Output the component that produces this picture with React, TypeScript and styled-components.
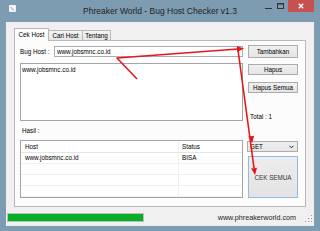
import React from "react";
import styled, { createGlobalStyle } from "styled-components";

const GlobalStyle = createGlobalStyle`
  html, body {
    margin: 0;
    padding: 0;
  }
  body {
    width: 320px;
    height: 231px;
    overflow: hidden;
    background: #7d9cb1;
    font-family: "Liberation Sans", Arial, sans-serif;
  }
`;

const Window = styled.div`
  position: relative;
  width: 320px;
  height: 231px;
  background: #7d9cb1;
  display: flex;
  flex-direction: column;
`;

const TitleBar = styled.div`
  height: 22px;
  flex-shrink: 0;
  display: grid;
  grid-template-columns: 1fr auto 1fr;
  align-items: start;
`;

const AppIcon = styled.svg`
  margin: 5px 0 0 9px;
`;

const Title = styled.div`
  padding-top: 6px;
  font-size: 8.5px;
  line-height: 10px;
  color: #1f1f1f;
  white-space: nowrap;
`;

const Controls = styled.div`
  justify-self: end;
  display: flex;
  align-items: flex-start;
  margin-right: 6px;
`;

const CtrlCell = styled.div`
  width: 12px;
  height: 12px;
  display: flex;
  align-items: center;
  justify-content: center;
`;

const CloseButton = styled.div`
  width: 26px;
  height: 12px;
  margin-left: 2px;
  background: #c75050;
  display: flex;
  align-items: center;
  justify-content: center;
`;

const Client = styled.div`
  flex: 1;
  min-height: 0;
  margin: 0 6px 5px 6px;
  background: #f0f0f0;
  display: flex;
  flex-direction: column;
`;

const TabArea = styled.div`
  flex: 1;
  min-height: 0;
  padding: 6px 8px 0 8px;
  display: flex;
  flex-direction: column;
`;

const TabStrip = styled.div`
  height: 13px;
  margin-bottom: -1px;
  display: flex;
  align-items: flex-start;
  position: relative;
  z-index: 1;
`;

const Tab = styled.div<{ $w: number; $active?: boolean }>`
  box-sizing: border-box;
  width: ${(p) => p.$w}px;
  height: ${(p) => (p.$active ? 13 : 11)}px;
  margin-top: ${(p) => (p.$active ? 0 : 2)}px;
  margin-left: -1px;
  &:first-child {
    margin-left: 0;
  }
  border: 1px solid #b9b9b9;
  border-bottom: ${(p) => (p.$active ? "none" : "1px solid #b9b9b9")};
  background: ${(p) =>
    p.$active ? "#fcfcfc" : "linear-gradient(#f3f3f3, #e6e6e6)"};
  font-size: 6.3px;
  line-height: ${(p) => (p.$active ? 12 : 9)}px;
  text-align: center;
  color: #000;
  white-space: nowrap;
`;

const Panel = styled.div`
  flex: 1;
  min-height: 0;
  border: 1px solid #b9b9b9;
  background: #fcfcfc;
  padding: 4px 7px 0 5px;
  display: flex;
  flex-direction: column;
`;

const Row = styled.div<{ $h: number; $mt?: number }>`
  height: ${(p) => p.$h}px;
  margin-top: ${(p) => p.$mt ?? 0}px;
  display: grid;
  grid-template-columns: 223px 51px;
  column-gap: 5px;
  flex-shrink: 0;
`;

const FieldLine = styled.div`
  display: flex;
  align-items: center;
`;

const Label = styled.span`
  width: 34px;
  font-size: 6.3px;
  color: #000;
  white-space: nowrap;
`;

const TextBox = styled.div`
  box-sizing: border-box;
  flex: 1;
  height: 11px;
  border: 1px solid #abadb3;
  background: #fff;
  padding-left: 2px;
  font-size: 6.3px;
  line-height: 9px;
  color: #000;
`;

const Button = styled.div<{ $h: number; $mt?: number; $default?: boolean }>`
  box-sizing: border-box;
  width: 50px;
  height: ${(p) => p.$h}px;
  margin-top: ${(p) => p.$mt ?? 0}px;
  border: 1px solid ${(p) => (p.$default ? "#8fbbe9" : "#acacac")};
  background: ${(p) =>
    p.$default
      ? "linear-gradient(#ededed, #e3e3e3)"
      : "linear-gradient(#f0f0f0, #e5e5e5)"};
  display: flex;
  align-items: center;
  justify-content: center;
  font-size: 6.3px;
  color: ${(p) => (p.$default ? "#333" : "#000")};
  white-space: nowrap;
`;

const Stack = styled.div`
  display: flex;
  flex-direction: column;
`;

const ListBox = styled.div`
  box-sizing: border-box;
  border: 1px solid #a5a5a5;
  background: #fff;
  padding: 2px 1px;
  font-size: 6.3px;
  line-height: 8px;
  color: #000;
`;

const SideText = styled.div<{ $mt: number }>`
  margin-top: ${(p) => p.$mt}px;
  padding-left: 2px;
  font-size: 6.3px;
  line-height: 8px;
  color: #000;
`;

const SectionLabel = styled.div`
  height: 20px;
  flex-shrink: 0;
  box-sizing: border-box;
  padding: 7px 0 0 2px;
  font-size: 6.3px;
  line-height: 8px;
  color: #000;
`;

const Table = styled.div`
  box-sizing: border-box;
  border: 1px solid #a5a5a5;
  background: #fff;
  display: grid;
  grid-template-columns: 158px 1fr;
  grid-template-rows: 12px repeat(4, 11px);
`;

const Cell = styled.div<{ $head?: boolean; $first?: boolean }>`
  box-sizing: border-box;
  border-bottom: 1px solid ${(p) => (p.$head ? "#e5e5e5" : "#f0f0f0")};
  border-right: ${(p) => (p.$first ? "1px solid #f0f0f0" : "none")};
  padding-left: ${(p) => (p.$first ? 4 : 3)}px;
  font-size: 6.3px;
  line-height: ${(p) => (p.$head ? 12 : 10)}px;
  color: #000;
  white-space: nowrap;
`;

const Select = styled.div`
  box-sizing: border-box;
  width: 51px;
  height: 11px;
  margin-top: 1px;
  margin-left: -1px;
  border: 1px solid #acacac;
  background: linear-gradient(#f0f0f0, #e5e5e5);
  display: flex;
  align-items: center;
  justify-content: space-between;
  padding: 0 3px 0 2px;
  font-size: 6.3px;
  color: #000;
`;

const StatusBar = styled.div`
  height: 19px;
  flex-shrink: 0;
  display: flex;
  align-items: center;
  padding: 2px 0 0 1px;
  box-sizing: border-box;
`;

const Progress = styled.div`
  box-sizing: border-box;
  width: 137px;
  height: 9px;
  border: 1px solid #bcbcbc;
  background: #e6e6e6;
  display: flex;
`;

const ProgressFill = styled.div`
  background: #06b025;
`;

const StatusText = styled.span`
  margin-left: auto;
  margin-right: 6px;
  font-size: 7.2px;
  color: #222;
  white-space: nowrap;
`;

const Overlay = styled.svg`
  position: absolute;
  left: 0;
  top: 0;
  pointer-events: none;
`;

const RED = "#e8161b";

function head(tx: number, ty: number, fx: number, fy: number, len = 7, half = 3) {
  const dx = tx - fx;
  const dy = ty - fy;
  const d = Math.hypot(dx, dy);
  const ux = dx / d;
  const uy = dy / d;
  const bx = tx - ux * len;
  const by = ty - uy * len;
  return `${tx},${ty} ${bx - uy * half},${by + ux * half} ${bx + uy * half},${by - ux * half}`;
}

const rows = [
  { host: "www.jobsmnc.co.id", status: "BISA" },
  { host: "", status: "" },
  { host: "", status: "" },
  { host: "", status: "" },
];

export default function App() {
  return (
    <>
      <GlobalStyle />
      <Window>
        <TitleBar>
          <AppIcon width="7" height="7" viewBox="0 0 7 7">
            <rect x="0" y="0" width="7" height="7" rx="1" fill="#f4f4f4" />
            <path d="M1.5 2 L5 5.5" stroke="#8aa4b6" strokeWidth="1" />
          </AppIcon>
          <Title>Phreaker World - Bug Host Checker v1.3</Title>
          <Controls>
            <CtrlCell>
              <svg width="7" height="7" viewBox="0 0 7 7">
                <rect x="0" y="5" width="7" height="1" fill="#333" />
              </svg>
            </CtrlCell>
            <CtrlCell>
              <svg width="7" height="6" viewBox="0 0 7 6">
                <rect x="0.5" y="0.5" width="6" height="5" fill="none" stroke="#333" />
                <rect x="0.5" y="0.5" width="6" height="1" fill="#333" />
              </svg>
            </CtrlCell>
            <CloseButton>
              <svg width="6" height="6" viewBox="0 0 6 6">
                <path d="M0.8 0.8 L5.2 5.2 M5.2 0.8 L0.8 5.2" stroke="#fff" strokeWidth="1.4" />
              </svg>
            </CloseButton>
          </Controls>
        </TitleBar>

        <Client>
          <TabArea>
            <TabStrip>
              <Tab $w={35} $active>
                Cek Host
              </Tab>
              <Tab $w={35}>Cari Host</Tab>
              <Tab $w={29}>Tentang</Tab>
            </TabStrip>
            <Panel>
              <Row $h={13}>
                <FieldLine>
                  <Label>Bug Host :</Label>
                  <TextBox>www.jobsmnc.co.id</TextBox>
                </FieldLine>
                <Button $h={13}>Tambahkan</Button>
              </Row>

              <Row $h={57} $mt={5}>
                <ListBox>www.jobsmnc.co.id</ListBox>
                <Stack>
                  <Button $h={11} $mt={1}>
                    Hapus
                  </Button>
                  <Button $h={11} $mt={7}>
                    Hapus Semua
                  </Button>
                  <SideText $mt={20}>Total : 1</SideText>
                </Stack>
              </Row>

              <SectionLabel>Hasil :</SectionLabel>

              <Row $h={58}>
                <Table>
                  <Cell $head $first>
                    Host
                  </Cell>
                  <Cell $head>Status</Cell>
                  {rows.map((r, i) => (
                    <React.Fragment key={i}>
                      <Cell $first>{r.host}</Cell>
                      <Cell>{r.status}</Cell>
                    </React.Fragment>
                  ))}
                </Table>
                <Stack>
                  <Select>
                    <span>GET</span>
                    <svg width="5" height="4" viewBox="0 0 5 4">
                      <path d="M0.5 0.8 L2.5 2.8 L4.5 0.8" fill="none" stroke="#222" strokeWidth="1" />
                    </svg>
                  </Select>
                  <Button $h={42} $mt={4} $default>
                    CEK SEMUA
                  </Button>
                </Stack>
              </Row>
            </Panel>
          </TabArea>

          <StatusBar>
            <Progress>
              <ProgressFill style={{ width: "100%" }} />
            </Progress>
            <StatusText>www.phreakerworld.com</StatusText>
            <svg width="12" height="12" viewBox="0 0 12 12">
              {[
                [9, 3],
                [9, 6],
                [6, 6],
                [9, 9],
                [6, 9],
                [3, 9],
              ].map(([x, y], i) => (
                <rect key={i} x={x} y={y} width="1" height="1" fill="#999" />
              ))}
            </svg>
          </StatusBar>
        </Client>

        <Overlay width="320" height="231" viewBox="0 0 320 231">
          <polyline
            points="137,79 117,58 238,49"
            fill="none"
            stroke={RED}
            strokeWidth="1.6"
            strokeLinejoin="round"
          />
          <polygon points={head(244, 48.5, 117, 58)} fill={RED} />
          <line x1="238" y1="50" x2="254" y2="168" stroke={RED} strokeWidth="1.6" />
          <polygon points={head(252.2, 143, 238, 50)} fill={RED} />
          <polygon points={head(255, 175, 238, 50)} fill={RED} />
        </Overlay>
      </Window>
    </>
  );
}
